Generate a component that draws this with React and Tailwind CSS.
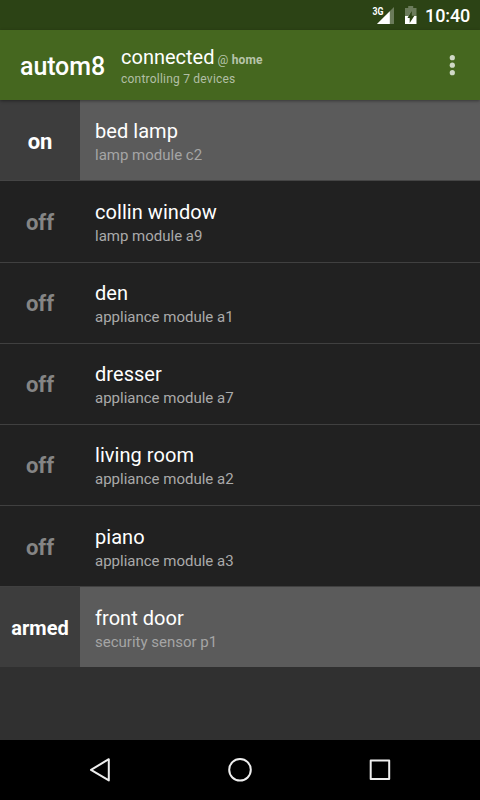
const devices = [
  { state: "on", name: "bed lamp", module: "lamp module c2" },
  { state: "off", name: "collin window", module: "lamp module a9" },
  { state: "off", name: "den", module: "appliance module a1" },
  { state: "off", name: "dresser", module: "appliance module a7" },
  { state: "off", name: "living room", module: "appliance module a2" },
  { state: "off", name: "piano", module: "appliance module a3" },
  { state: "armed", name: "front door", module: "security sensor p1" },
];

function StatusBar() {
  return (
    <div className="flex h-[30px] shrink-0 items-center bg-[#2c4315] text-white">
      <svg className="ml-[370px] h-[30px] w-[52px] shrink-0" viewBox="370 0 52 30">
        <text x="372.5" y="15" fontSize="11" fontWeight="700" textLength="11" lengthAdjust="spacingAndGlyphs" fill="#fff">3G</text>
        <path d="M394 7v17h-17z" fill="#fff" fillOpacity=".3" />
        <path d="M389.8 11.2V24H377z" fill="#fff" />
        <path d="M405 8h3.2V6h5v2h3.3v8.5H405z" fill="#fff" fillOpacity=".3" />
        <path d="M405 16h11.5v8H405z" fill="#fff" />
        <path d="M411.8 11v4.7h2.6l-4.7 7.3v-5h-2.5z" fill="#2c4315" />
        <path d="M405 16h3.6l3.2-5.5-4.6 7.5H405z" fill="#fff" />
      </svg>
      <span className="ml-[3px] mt-[2px] text-[18px] font-medium leading-[30px] tracking-[-0.1px]">10:40</span>
    </div>
  );
}

function Header() {
  return (
    <header className="relative z-10 flex h-[70px] shrink-0 bg-[#45671f] shadow-[0_1px_3px_rgba(0,0,0,0.4)]">
      <h1 className="ml-5 mt-[22px] w-[101px] text-[25px] font-medium leading-[30px] tracking-[-0.1px] text-white">autom8</h1>
      <div className="flex flex-col">
        <div className="mt-[15px] flex h-6 items-baseline text-[20px] leading-6 text-white">
          connected
          <span className="ml-[3px] text-[12px] tracking-[0.2px] text-[#b7c4aa]">@ <b>home</b></span>
        </div>
        <div className="mt-[2px] text-[12px] leading-4 tracking-[0.22px] text-[#b2bfa5]">controlling 7 devices</div>
      </div>
      <svg className="ml-auto mr-[20px] mt-[24px] h-6 w-4" viewBox="0 0 16 24" fill="#d0d9c7">
        <circle cx="8.3" cy="3.7" r="2.6" />
        <circle cx="8.3" cy="11.2" r="2.6" />
        <circle cx="8.3" cy="18.7" r="2.6" />
      </svg>
    </header>
  );
}

function DeviceRow({ state, name, module }) {
  const active = state !== "off";
  return (
    <li
      className={
        active
          ? "flex h-[81.17px] border-b border-[#454545] bg-[#5b5b5b] first:h-[81.4px] last:h-[80px] last:border-b-0"
          : "flex h-[81.17px] border-b border-[#404040] bg-[#212121]"
      }
    >
      <div className={active ? "flex w-20 items-center justify-center bg-[#3d3d3d] pt-[2px] font-bold text-white" : "flex w-20 items-center justify-center pt-[2px] font-bold text-[#858585]"}>
        <span className={state === "armed" ? "text-[20px]" : "text-[22px]"}>{state}</span>
      </div>
      <div className="ml-[15px] pt-[18.6px]">
        <div className="text-[20px] leading-[25px] tracking-[0.05px] text-white">{name}</div>
        <div className={active ? "text-[15px] leading-[22px] text-[#a5a5a5]" : "text-[15px] leading-[22px] text-[#aaaaaa]"}>{module}</div>
      </div>
    </li>
  );
}

function NavigationBar() {
  return (
    <nav className="flex h-[60px] shrink-0 bg-black">
      <svg className="h-[60px] w-[480px]" viewBox="0 740 480 60" fill="none" stroke="#eee" strokeWidth="2" strokeLinejoin="round">
        <path d="M91 769.8l17.8-10.6v21.2z" />
        <circle cx="240" cy="769.8" r="10.8" />
        <path d="M370.7 760.5h18.5v18.5h-18.5z" />
      </svg>
    </nav>
  );
}

export default function App() {
  return (
    <div className="flex h-[800px] w-[480px] flex-col overflow-hidden bg-[#303030] font-['Roboto',sans-serif]">
      <StatusBar />
      <Header />
      <ul className="flex-1">
        {devices.map((device) => (
          <DeviceRow key={device.name} {...device} />
        ))}
      </ul>
      <NavigationBar />
    </div>
  );
}
